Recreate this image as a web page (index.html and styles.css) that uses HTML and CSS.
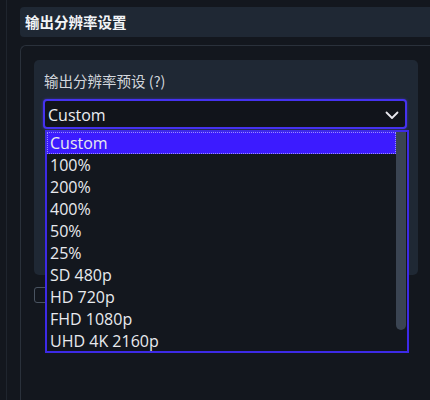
FILE: index.html
```html
<!DOCTYPE html>
<html>
<head>
<meta charset="utf-8">
<link rel="stylesheet" href="styles.css">
</head>
<body>
<div class="app">
  <div class="header">输出分辨率设置</div>
  <div class="panel">
    <div class="card">
      <div class="label">输出分辨率预设 (?)</div>
      <div class="select">
        <span>Custom</span>
        <svg class="chev" width="14" height="9" viewBox="0 0 14 9"><polyline points="1.5,1.5 7,7 12.5,1.5" fill="none" stroke="#e8e8ee" stroke-width="1.8" stroke-linecap="round" stroke-linejoin="round"/></svg>
      </div>
    </div>
    <div class="check"></div>
  </div>
  <div class="list">
    <div class="items">
      <div class="item sel">Custom</div>
      <div class="item">100%</div>
      <div class="item">200%</div>
      <div class="item">400%</div>
      <div class="item">50%</div>
      <div class="item">25%</div>
      <div class="item">SD 480p</div>
      <div class="item">HD 720p</div>
      <div class="item">FHD 1080p</div>
      <div class="item">UHD 4K 2160p</div>
    </div>
    <div class="scroll"><div class="thumb"></div></div>
  </div>
</div>
</body>
</html>
```
FILE: styles.css
```css
html, body {
  margin: 0;
  padding: 0;
  background: #13171e;
  width: 430px;
  height: 400px;
  overflow: hidden;
  font-family: "Open Sans", "Noto Sans CJK SC", sans-serif;
  color: #e6e8ec;
}
.app {
  position: relative;
  margin-left: 6px;
  border-left: 1px solid #1f252e;
  padding-left: 13px;
  height: 400px;
  padding-top: 7px;
  box-sizing: border-box;
}
.header {
  height: 30px;
  line-height: 30px;
  background: #1f2834;
  border-radius: 4px 0 0 4px;
  padding-left: 5px;
  font-size: 14.5px;
  font-weight: bold;
  color: #f2f4f7;
  font-family: "Noto Sans CJK SC", sans-serif;
}
.panel {
  margin-top: 8px;
  border: 1px solid #2a313b;
  border-right: none;
  border-bottom: none;
  border-radius: 6px 0 0 0;
  padding: 14px 12px 0 13px;
  height: 360px;
  box-sizing: border-box;
}
.card {
  background: #1f2834;
  border-radius: 5px;
  height: 215px;
  padding: 13px 11px 0 9px;
  box-sizing: border-box;
}
.label {
  font-family: "Noto Sans CJK SC", sans-serif;
  font-size: 14.5px;
  line-height: 16px;
  color: #d3d7dd;
  margin-left: 1px;
  height: 26px;
}
.select {
  height: 30px;
  border: 2px solid #4532f0;
  border-radius: 4px;
  background: #11141b;
  box-sizing: border-box;
  display: flex;
  align-items: center;
  justify-content: space-between;
  padding: 1px 6px 0 3px;
  font-size: 16px;
  color: #eceef2;
  box-shadow: 0 0 3px rgba(80, 60, 255, 0.5);
}
.chev { display: block; margin-top: 2px; }
.check {
  margin-top: 12px;
  width: 16px;
  height: 16px;
  border: 1.5px solid #4a5461;
  border-radius: 3px;
  box-sizing: border-box;
}
.list {
  position: absolute;
  left: 38px;
  top: 130px;
  width: 364px;
  height: 223px;
  border: 2px solid #3d2ae6;
  box-sizing: border-box;
  background: #13171e;
  display: flex;
  overflow: hidden;
}
.items { flex: 1; }
.item {
  height: 22px;
  line-height: 22px;
  padding-left: 3px;
  font-size: 16px;
  color: #e8eaee;
}
.item.sel {
  background: #3c1bff;
  outline: 1px dotted #9a8cff;
  outline-offset: -1px;
}
.scroll {
  width: 10px;
  margin-right: 1px;
}
.thumb {
  height: 198px;
  background: #3a4452;
  border-radius: 0 0 5px 5px;
}
```
